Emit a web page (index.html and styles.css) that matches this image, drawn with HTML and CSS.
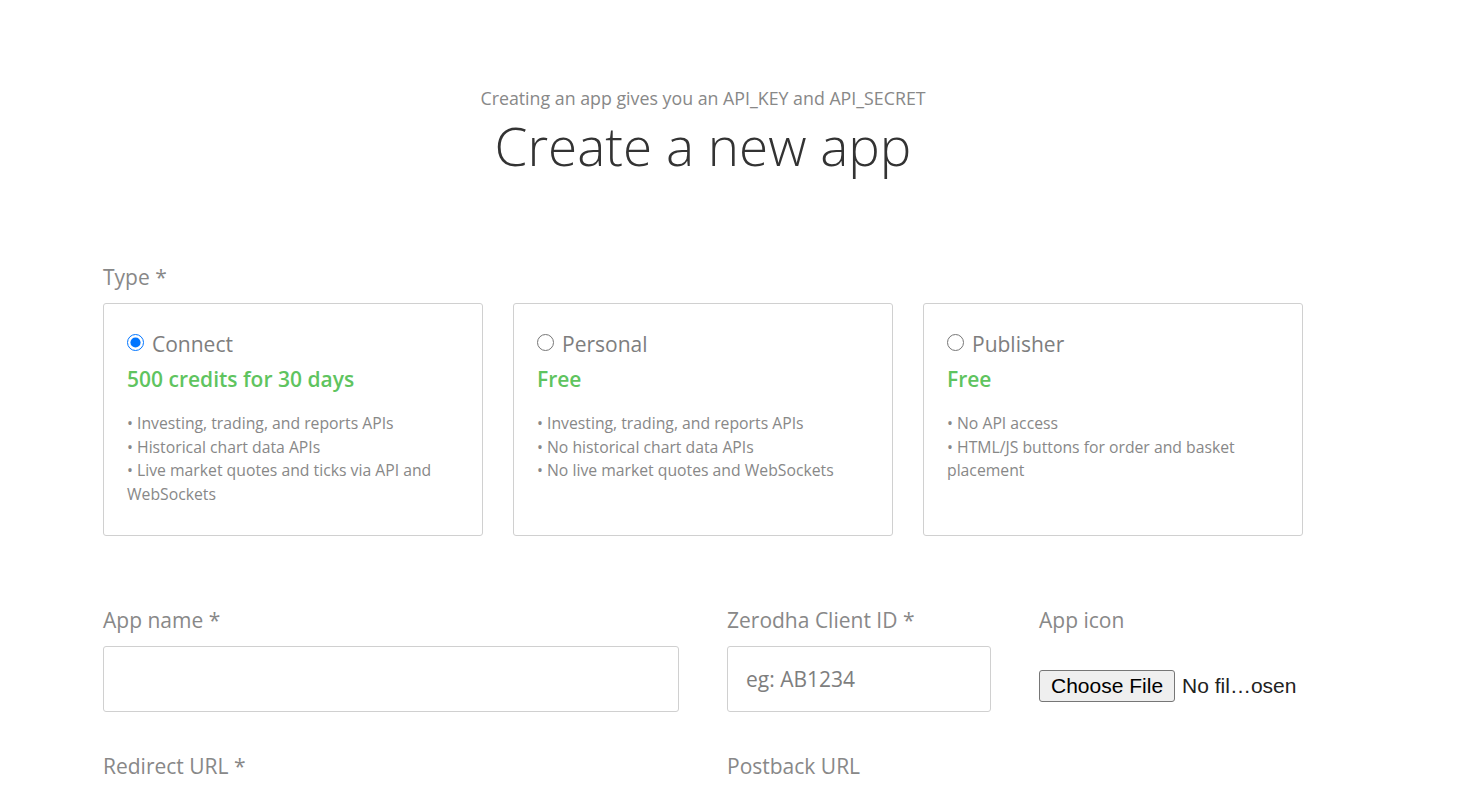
FILE: index.html
```html
<!DOCTYPE html>
<html lang="en">
<head>
<meta charset="utf-8">
<title>Create a new app</title>
<link rel="stylesheet" href="styles.css">
</head>
<body>
<main class="page">
  <header class="intro">
    <p class="intro-sub">Creating an app gives you an API_KEY and API_SECRET</p>
    <h1 class="intro-title">Create a new app</h1>
  </header>

  <section class="type-section">
    <div class="label">Type *</div>
    <div class="cards">
      <label class="card">
        <span class="card-head"><input type="radio" name="type" class="radio" checked> Connect</span>
        <span class="card-price">500 credits for 30 days</span>
        <span class="card-list">
          • Investing, trading, and reports APIs<br>
          • Historical chart data APIs<br>
          • Live market quotes and ticks via API and WebSockets
        </span>
      </label>
      <label class="card">
        <span class="card-head"><input type="radio" name="type" class="radio"> Personal</span>
        <span class="card-price">Free</span>
        <span class="card-list">
          • Investing, trading, and reports APIs<br>
          • No historical chart data APIs<br>
          • No live market quotes and WebSockets
        </span>
      </label>
      <label class="card">
        <span class="card-head"><input type="radio" name="type" class="radio"> Publisher</span>
        <span class="card-price">Free</span>
        <span class="card-list">
          • No API access<br>
          • HTML/JS buttons for order and basket placement
        </span>
      </label>
    </div>
  </section>

  <section class="form-grid">
    <div class="field">
      <div class="label">App name *</div>
      <input type="text" class="text-input">
    </div>
    <div class="field">
      <div class="label">Zerodha Client ID *</div>
      <input type="text" class="text-input" placeholder="eg: AB1234">
    </div>
    <div class="field">
      <div class="label">App icon</div>
      <input type="file" class="file-input">
    </div>
    <div class="field">
      <div class="label">Redirect URL *</div>
    </div>
    <div class="field">
      <div class="label">Postback URL</div>
    </div>
  </section>
</main>
</body>
</html>
```

FILE: styles.css
```css
html, body {
  margin: 0;
  padding: 0;
  background: #fff;
}

body {
  font-family: "Open Sans", "Noto Sans", sans-serif;
  color: #444;
  overflow: hidden;
}

.page {
  width: 1200px;
  margin-left: 103px;
  padding-top: 86px;
}

.intro {
  text-align: center;
}

.intro-sub {
  margin: 0;
  font-size: 17.8px;
  line-height: 24px;
  color: #888;
}

.intro-title {
  margin: 6px 0 0;
  font-size: 53px;
  line-height: 60px;
  font-weight: 300;
  color: #333;
}

.label {
  font-size: 21px;
  line-height: 30px;
  color: #888;
}

.type-section {
  margin-top: 86px;
}

.cards {
  margin-top: 11px;
  display: flex;
  gap: 30px;
}

.card {
  flex: 1 1 0;
  display: flex;
  flex-direction: column;
  border: 1px solid #d0d0d0;
  border-radius: 3px;
  padding: 25px 23px 26px;
  min-height: 180px;
  cursor: pointer;
}

.card-head {
  display: flex;
  align-items: center;
  gap: 8px;
  font-size: 21px;
  line-height: 30px;
  color: #7e7e7e;
}

.radio {
  margin: 0;
  width: 17px;
  height: 17px;
  accent-color: #0075ff;
  position: relative;
  top: -2px;
}

.card-price {
  margin-top: 5px;
  font-size: 21px;
  line-height: 30px;
  font-weight: 600;
  color: #5fc45f;
}

.card-list {
  margin-top: 18px;
  font-size: 15.75px;
  line-height: 23.6px;
  color: #888;
}

.form-grid {
  margin-top: 69px;
  display: grid;
  grid-template-columns: 576px 264px 264px;
  column-gap: 48px;
  row-gap: 39px;
}

.field .label {
  margin-bottom: 11px;
}

.text-input {
  display: block;
  box-sizing: border-box;
  width: 100%;
  height: 66px;
  border: 1px solid #d0d0d0;
  border-radius: 3px;
  padding: 0 18px;
  font-family: "Open Sans", "Noto Sans", sans-serif;
  font-size: 21px;
  color: #444;
  outline: none;
}

.text-input::placeholder {
  color: #7e7e7e;
}

.file-input {
  display: block;
  margin-top: 35px;
  width: 262px;
  font-family: "Liberation Sans", Arial, sans-serif;
  font-size: 21px;
  color: #222;
}

.file-input::file-selector-button {
  font-family: "Liberation Sans", Arial, sans-serif;
  font-size: 21px;
  padding: 3px 11px;
  margin-right: 7px;
  border: 1px solid #767676;
  border-radius: 3px;
  background: #efefef;
  color: #000;
}
```
